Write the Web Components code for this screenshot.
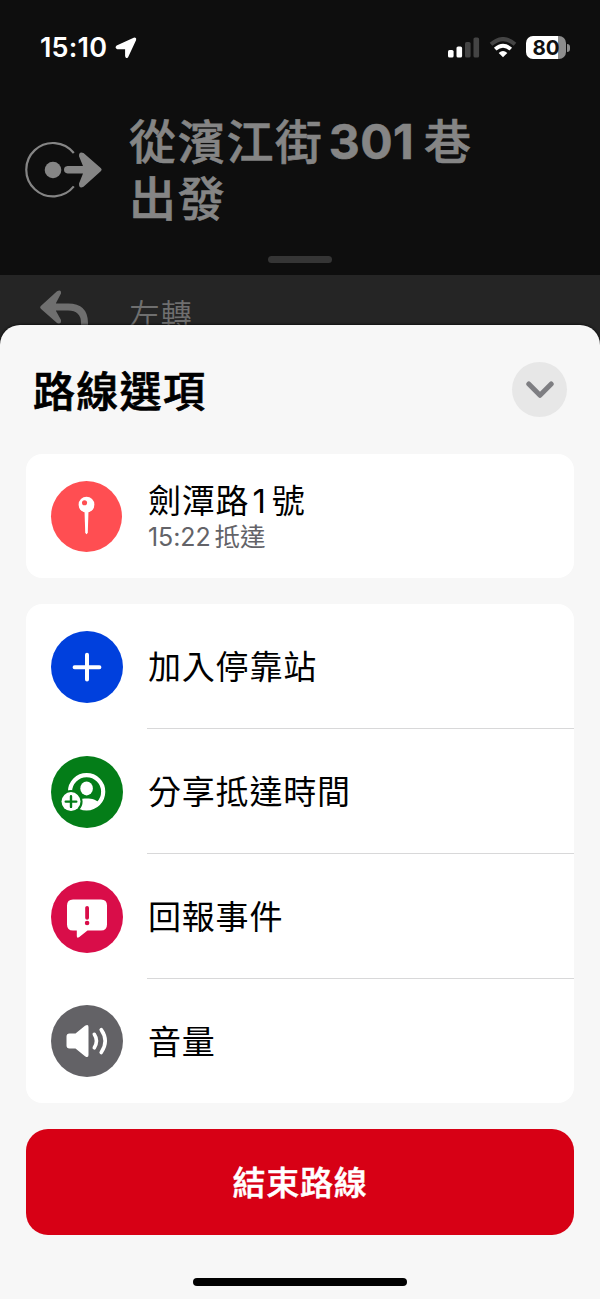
<!DOCTYPE html>
<html lang="zh-Hant">
<head>
  <meta charset="utf-8">
  <title>路線選項</title>
  <style>
    body {
      margin: 0;
      background: #252525;
      font-family: Inter, "Noto Sans CJK TC", sans-serif;
    }
  </style>
</head>
<body>
  <route-page></route-page>

  <script>
    const icons = {
      pin: /* html */`
        <path d="M34 31h4l-.7 21q-1.3 4-2.6 0z"/>
        <circle cx="36" cy="24" r="8"/>
        <circle cx="34" cy="22" r="2.6" fill="#ff4e52"/>`,
      plus: /* html */`
        <path d="M36 23.8v24.8M23.6 36.2h24.8" fill="none" stroke="white" stroke-width="4" stroke-linecap="round"/>`,
      share: /* html */`
        <circle cx="35.6" cy="35.8" r="16.6" fill="none" stroke="white" stroke-width="4.2"/>
        <ellipse cx="35.6" cy="32.4" rx="6.3" ry="7"/>
        <path d="M23 47C26 43.6 30 42.4 35.6 42.4S45.5 43.6 48.2 47Q43 53.6 35.6 53.6T23 47Z"/>
        <circle cx="20" cy="45.6" r="11.6" fill="#047d18"/>
        <circle cx="20" cy="45.6" r="9.5"/>
        <path d="M20 40.3v10.6M14.7 45.6h10.6" fill="none" stroke="#047d18" stroke-width="2.4" stroke-linecap="round"/>`,
      report: /* html */`
        <path d="M22 18.5H50Q56 18.5 56 24.5V43.5Q56 49.5 50 49.5H36.5L28 56.3Q25.8 57.7 25.8 55V49.5H22Q16 49.5 16 43.5V24.5Q16 18.5 22 18.5Z"/>
        <path d="M36.1 26.8v10" fill="none" stroke="#d90d49" stroke-width="3.8" stroke-linecap="round"/>
        <circle cx="36.1" cy="42" r="2.3" fill="#d90d49"/>`,
      volume: /* html */`
        <path d="M18.5 28.5H24.5L34 20.8Q37.5 18.5 37.5 22V50Q37.5 53.5 34 51.2L24.5 43.5H18.5Q15.5 43.5 15.5 40.5V31.5Q15.5 28.5 18.5 28.5Z"/>
        <path d="M43.3 29.3Q47.6 35.8 43.3 42.8M50.2 24.6Q58.2 36 50.2 47.5" fill="none" stroke="white" stroke-width="3.6" stroke-linecap="round"/>`
    }

    class StatusBar extends HTMLElement {
      constructor () {
        super()
        this.shadow = this.attachShadow({ mode: 'open' })
      }

      connectedCallback () {
        this.shadow.innerHTML =
          /* html */`
          <style>
            :host {
              display: flex;
              align-items: center;
              box-sizing: border-box;
              height: 95px;
              padding: 0 30px 0 40px;
              color: white;
            }

            .time {
              font-size: 27px;
              font-weight: 600;
              letter-spacing: 0.2px;
            }

            .location {
              margin-left: 8px;
            }

            .signal {
              margin-left: auto;
            }

            .wifi {
              margin-left: 9px;
            }

            .battery {
              display: flex;
              align-items: center;
              margin-left: 9px;
            }

            .level {
              width: 40px;
              height: 23px;
              border-radius: 7px;
              background: linear-gradient(to right, white 32px, #8d8d8d 32px);
              color: #101010;
              font-size: 20.5px;
              font-weight: 700;
              line-height: 24px;
              text-align: center;
            }

            .tip {
              width: 3px;
              height: 8px;
              margin-left: 1px;
              border-radius: 0 4px 4px 0;
              background: #8d8d8d;
            }
          </style>
          <span class="time">15:10</span>
          <svg class="location" width="22" height="22" viewBox="0 0 22 22">
            <path d="M2 9.3L19 1.5Q20.8 1 20.3 2.8L12.5 19.6Q11.2 21 10.9 19V11.4H2.5Q.6 10.8 2 9.3Z" fill="white" stroke="white" stroke-width="1.6" stroke-linejoin="round"/>
          </svg>
          <svg class="signal" width="32" height="21" viewBox="0 0 32 21">
            <rect x="0" y="13" width="5.6" height="7.5" rx="1.6" fill="white"/>
            <rect x="8.5" y="9.5" width="5.6" height="11" rx="1.6" fill="white"/>
            <rect x="17" y="5" width="5.6" height="15.5" rx="1.6" fill="#444"/>
            <rect x="25.5" y="0.5" width="5.6" height="20" rx="1.6" fill="#444"/>
          </svg>
          <svg class="wifi" width="28" height="21" viewBox="0 0 28 21">
            <path d="M2 7.3Q14 -3.2 26 7.3" fill="none" stroke="#444" stroke-width="4"/>
            <path d="M6.2 12.1Q14 5.2 21.8 12.1" fill="none" stroke="white" stroke-width="3.8"/>
            <path d="M9.7 16Q14 12.2 18.3 16L14 20.3Z" fill="white"/>
          </svg>
          <div class="battery">
            <div class="level">80</div>
            <div class="tip"></div>
          </div>
          `
      }
    }

    class DirectionHeader extends HTMLElement {
      constructor () {
        super()
        this.shadow = this.attachShadow({ mode: 'open' })
      }

      connectedCallback () {
        this.shadow.innerHTML =
          /* html */`
          <style>
            :host {
              display: flex;
              flex-direction: column;
              height: 275px;
              background: #0e0e0e;
              color: #858585;
            }

            .direction {
              display: flex;
              align-items: flex-start;
              height: 161px;
            }

            .direction svg {
              flex: none;
              margin: 44px 0 0 24px;
            }

            h1 {
              margin: 18px 0 0 25px;
              font-size: 47px;
              font-weight: 500;
              line-height: 57px;
              letter-spacing: 1.7px;
              white-space: nowrap;
              -webkit-text-stroke: 0.6px;
            }

            .number {
              margin: 0 10px 0 5px;
              font-size: 48px;
              font-weight: 700;
              letter-spacing: 0.4px;
            }

            .grabber {
              align-self: center;
              width: 64px;
              height: 7px;
              border-radius: 4px;
              background: #353535;
            }
          </style>
          <status-bar></status-bar>
          <div class="direction">
            <svg width="80" height="60" viewBox="0 0 80 60">
              <path d="M49.8 14A26.7 26.7 0 1 0 49.8 47.4" fill="none" stroke="#858585" stroke-width="2.2"/>
              <circle cx="29" cy="31" r="8.3" fill="#858585"/>
              <path d="M43.5 27H59L55 17.2Q54.8 12 59.5 14L77 29.3Q78.4 30.7 77 32L59.5 47.8Q54.8 50 55 44.5L59 34.4H43.5Q40 34 40 30.7T43.5 27Z" fill="#858585"/>
            </svg>
            <h1>從濱江街<span class="number">301</span>巷<br>出發</h1>
          </div>
          <div class="grabber"></div>
          `
      }
    }

    class NextTurn extends HTMLElement {
      constructor () {
        super()
        this.shadow = this.attachShadow({ mode: 'open' })
      }

      connectedCallback () {
        this.shadow.innerHTML =
          /* html */`
          <style>
            :host {
              display: flex;
              align-items: flex-start;
              height: 72px;
              overflow: hidden;
              background: #252525;
              color: #6f6f6f;
              font-size: 31px;
            }

            svg {
              flex: none;
              margin: 14px 0 0 39px;
            }

            span {
              margin: 19px 0 0 39px;
              line-height: 42px;
              font-weight: 350;
              letter-spacing: 0.7px;
            }
          </style>
          <svg width="51" height="60" viewBox="0 0 51 60">
            <path d="M15 18H29Q45.5 18 45.5 34V60" fill="none" stroke="#6f6f6f" stroke-width="7"/>
            <path d="M1.8 17L18 2.2Q22.5 0 22 4.5L17 14V22L22 31Q22.5 36 18 34L1.8 19.7Q.4 18.3 1.8 17Z" fill="#6f6f6f"/>
          </svg>
          <span><slot></slot></span>
          `
      }
    }

    class RoundIcon extends HTMLElement {
      constructor () {
        super()
        this.shadow = this.attachShadow({ mode: 'open' })
      }

      connectedCallback () {
        this.shadow.innerHTML =
          /* html */`
          <style>
            :host {
              display: block;
              flex: none;
              width: 72px;
              height: 72px;
            }

            svg {
              display: block;
              border-radius: 50%;
              background: ${this.getAttribute('color')};
            }
          </style>
          <svg width="100%" height="100%" viewBox="0 0 72 72" fill="white">${icons[this.getAttribute('name')]}</svg>
          `
      }
    }

    class DestinationCard extends HTMLElement {
      constructor () {
        super()
        this.shadow = this.attachShadow({ mode: 'open' })
      }

      connectedCallback () {
        this.shadow.innerHTML =
          /* html */`
          <style>
            :host {
              display: flex;
              align-items: center;
              box-sizing: border-box;
              height: 124px;
              padding-left: 25px;
              border-radius: 16px;
              background: white;
            }

            round-icon {
              width: 71px;
              height: 71px;
            }

            .texts {
              margin-left: 26px;
              padding-top: 2px;
            }

            .name {
              font-size: 33px;
              line-height: 40px;
              letter-spacing: 0.8px;
            }

            .arrival {
              color: #636368;
              font-size: 25.5px;
              line-height: 32px;
            }
          </style>
          <round-icon name="pin" color="#ff4e52"></round-icon>
          <div class="texts">
            <div class="name"><slot name="place"></slot></div>
            <div class="arrival"><slot name="arrival"></slot></div>
          </div>
          `
      }
    }

    class OptionList extends HTMLElement {
      constructor () {
        super()
        this.shadow = this.attachShadow({ mode: 'open' })

        this.data = []
      }

      connectedCallback () {
        this.loadData()
        this.render()
      }

      loadData () {
        this.data = [
          { icon: 'plus', color: '#0040dd', title: '加入停靠站' },
          { icon: 'share', color: '#047d18', title: '分享抵達時間' },
          { icon: 'report', color: '#d90d49', title: '回報事件' },
          { icon: 'volume', color: '#636266', title: '音量' }
        ]
      }

      render () {
        this.shadow.innerHTML =
          /* html */`
          <style>
            :host {
              display: flex;
              flex-direction: column;
              height: 499px;
              border-radius: 16px;
              background: white;
            }

            .option {
              height: 125px;
              display: flex;
              align-items: center;
              padding-left: 25px;
            }

            .option:last-child {
              height: 124px;
            }

            .title {
              flex: 1;
              align-self: stretch;
              display: flex;
              align-items: center;
              box-sizing: border-box;
              margin-left: 24px;
              padding: 0 0 2px 1px;
              border-bottom: 1px solid #d8d8d9;
              font-size: 33px;
              letter-spacing: 0.8px;
            }

            .option:last-child .title {
              border-bottom: none;
            }
          </style>
          `

        this.data.forEach(item => {
          const option = document.createElement('div')
          option.classList.add('option')
          this.shadow.appendChild(option)

          const icon = document.createElement('round-icon')
          icon.setAttribute('name', item.icon)
          icon.setAttribute('color', item.color)
          option.appendChild(icon)

          const title = document.createElement('div')
          title.classList.add('title')
          title.textContent = item.title
          option.appendChild(title)
        })
      }
    }

    class RouteSheet extends HTMLElement {
      constructor () {
        super()
        this.shadow = this.attachShadow({ mode: 'open' })
      }

      connectedCallback () {
        this.shadow.innerHTML =
          /* html */`
          <style>
            :host {
              position: relative;
              flex: 1;
              display: flex;
              flex-direction: column;
              gap: 26px;
              margin-top: -22px;
              padding: 0 26px;
              border-radius: 20px 20px 0 0;
              background: #f7f7f7;
              box-shadow: 0 0 3px #000;
            }

            .top {
              display: flex;
              align-items: center;
              justify-content: space-between;
              height: 129px;
              margin-bottom: -26px;
              padding: 0 7px;
            }

            h2 {
              margin: 0;
              padding-bottom: 3px;
              font-size: 42px;
              font-weight: 500;
              letter-spacing: 1.3px;
              -webkit-text-stroke: 0.7px;
            }

            .top button {
              display: grid;
              place-items: center;
              width: 55px;
              height: 55px;
              padding: 0;
              border: none;
              border-radius: 50%;
              background: #e7e7e7;
            }

            .house {
              margin: 0 5px 0 3px;
            }

            .clock {
              margin-right: 4px;
              font-size: 25px;
              letter-spacing: -0.1px;
            }

            .end {
              height: 106px;
              padding: 0 0 3px;
              border: none;
              border-radius: 22px;
              background: #d70015;
              color: white;
              font: 500 33px Inter, "Noto Sans CJK TC", sans-serif;
              letter-spacing: 0.8px;
              -webkit-text-stroke: 0.5px;
            }

            .home {
              align-self: center;
              width: 214px;
              height: 8px;
              margin-top: 17px;
              border-radius: 4px;
              background: black;
            }
          </style>
          <div class="top">
            <h2>路線選項</h2>
            <button aria-label="關閉">
              <svg width="28" height="18" viewBox="0 0 28 18">
                <path d="M2.8 3L14 14.3L25.2 3" fill="none" stroke="#7e7e82" stroke-width="5" stroke-linecap="round" stroke-linejoin="round"/>
              </svg>
            </button>
          </div>
          <destination-card>
            <span slot="place">劍潭路<span class="house">1</span>號</span>
            <span slot="arrival"><span class="clock">15:22</span>抵達</span>
          </destination-card>
          <option-list></option-list>
          <button class="end">結束路線</button>
          <div class="home"></div>
          `
      }
    }

    class RoutePage extends HTMLElement {
      constructor () {
        super()
        this.shadow = this.attachShadow({ mode: 'open' })
      }

      connectedCallback () {
        this.shadow.innerHTML =
          /* html */`
          <style>
            :host {
              display: flex;
              flex-direction: column;
              width: 600px;
              height: 1299px;
              overflow: hidden;
            }
          </style>
          <direction-header></direction-header>
          <next-turn>左轉</next-turn>
          <route-sheet></route-sheet>
          `
      }
    }

    customElements.define('status-bar', StatusBar)
    customElements.define('direction-header', DirectionHeader)
    customElements.define('next-turn', NextTurn)
    customElements.define('round-icon', RoundIcon)
    customElements.define('destination-card', DestinationCard)
    customElements.define('option-list', OptionList)
    customElements.define('route-sheet', RouteSheet)
    customElements.define('route-page', RoutePage)
  </script>
</body>
</html>
